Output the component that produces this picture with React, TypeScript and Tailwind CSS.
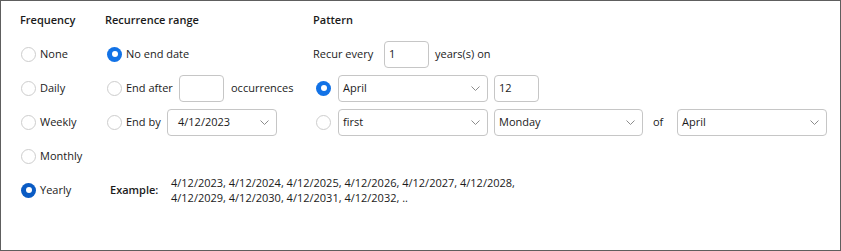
import type { ReactNode } from 'react';

const Radio = ({ checked = false, dark = false }: { checked?: boolean; dark?: boolean }) => {
  if (checked) {
    return (
      <span
        className={`flex h-[15px] w-[15px] shrink-0 items-center justify-center rounded-full ${
          dark ? 'bg-[#0a5bc4]' : 'bg-[#1272e6]'
        }`}
      >
        <span className="h-[6px] w-[6px] rounded-full bg-white" />
      </span>
    );
  }
  return <span className="h-[15px] w-[15px] shrink-0 rounded-full border border-[#cdcdcd] bg-white" />;
};

const Chevron = () => (
  <svg width="9" height="5" viewBox="0 0 9 5" className="shrink-0">
    <polyline points="0.5,0.5 4.5,4.5 8.5,0.5" fill="none" stroke="#8c8c8c" strokeWidth="1" />
  </svg>
);

const Box = ({ value = '', width }: { value?: string; width: string }) => (
  <div className={`flex h-[27px] ${width} shrink-0 items-center rounded-[4px] border border-[#c6c6c6] bg-white pl-[4px]`}>
    {value}
  </div>
);

const Select = ({ value, width, pad = 'pl-[4px]' }: { value: string; width: string; pad?: string }) => (
  <div
    className={`flex h-[27px] ${width} shrink-0 items-center justify-between rounded-[4px] border border-[#c6c6c6] bg-white ${pad} pr-[7px]`}
  >
    <span>{value}</span>
    <Chevron />
  </div>
);

const Row = ({ children, className = '' }: { children?: ReactNode; className?: string }) => (
  <div className={`flex h-[34px] items-center ${className}`}>{children}</div>
);

const Header = ({ children }: { children: ReactNode }) => (
  <div className="flex h-[34px] items-center font-semibold">{children}</div>
);

const App = () => {
  const frequencies = ['None', 'Daily', 'Weekly', 'Monthly', 'Yearly'];

  return (
    <div className="flex h-[251px] w-[841px] border border-[#5e5e5e] bg-white pl-[19px] pt-[2px] font-['Open_Sans',sans-serif] text-[11px] text-[#1b1b1b]">
      {/* frequency */}
      <div className="w-[85px] shrink-0">
        <Header>Frequency</Header>
        {frequencies.map((f) => (
          <Row key={f} className="gap-[4px] pl-[1px]">
            <Radio checked={f === 'Yearly'} dark />
            <span>{f}</span>
          </Row>
        ))}
      </div>

      <div className="flex flex-col">
        <div className="flex">
          {/* recurrence range */}
          <div className="w-[208px] shrink-0">
            <Header>Recurrence range</Header>
            <Row className="gap-[4px] pl-[2px]">
              <Radio checked />
              <span>No end date</span>
            </Row>
            <Row className="pl-[2px]">
              <Radio />
              <span className="ml-[4px] w-[53px]">End after</span>
              <Box width="w-[45px]" />
              <span className="ml-[7px]">occurrences</span>
            </Row>
            <Row className="pl-[2px]">
              <Radio />
              <span className="ml-[4px] w-[41px]">End by</span>
              <Select value="4/12/2023" width="w-[110px]" pad="pl-[10px]" />
            </Row>
          </div>

          {/* pattern */}
          <div>
            <Header>Pattern</Header>
            <Row>
              <span className="w-[71px]">Recur every</span>
              <Box value="1" width="w-[45px]" />
              <span className="ml-[6px]">years(s) on</span>
            </Row>
            <Row className="pl-[3px]">
              <Radio checked />
              <div className="ml-[7px]">
                <Select value="April" width="w-[150px]" />
              </div>
              <div className="ml-[6px]">
                <Box value="12" width="w-[45px]" />
              </div>
            </Row>
            <Row className="pl-[3px]">
              <Radio />
              <div className="ml-[7px]">
                <Select value="first" width="w-[150px]" />
              </div>
              <div className="ml-[6px]">
                <Select value="Monday" width="w-[149px]" />
              </div>
              <span className="ml-[10px] w-[24px]">of</span>
              <Select value="April" width="w-[150px]" />
            </Row>
          </div>
        </div>

        <Row />
        <Row className="pl-[5px]">
          <span className="w-[61px] shrink-0 font-semibold">Example:</span>
          <div className="leading-[15px]">
            <div>4/12/2023, 4/12/2024, 4/12/2025, 4/12/2026, 4/12/2027, 4/12/2028,</div>
            <div>4/12/2029, 4/12/2030, 4/12/2031, 4/12/2032, ..</div>
          </div>
        </Row>
      </div>
    </div>
  );
};

export default App;
